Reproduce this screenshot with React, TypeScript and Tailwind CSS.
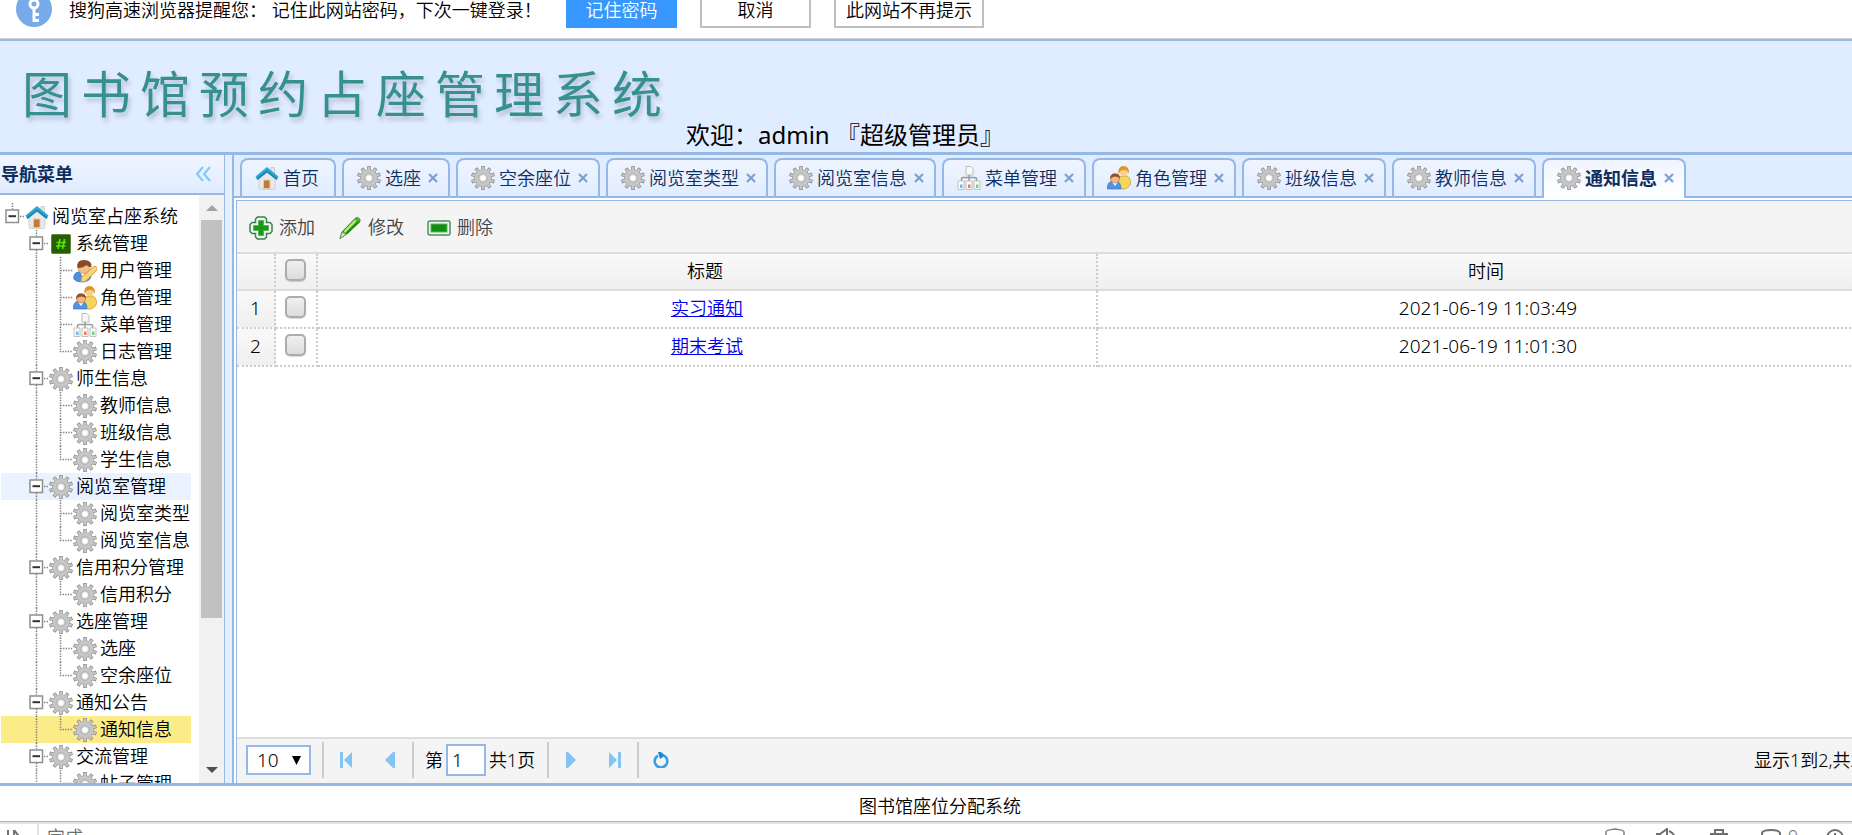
import { useState } from "react";
import type { ReactNode } from "react";

type IconName = "home" | "gear" | "hash" | "user" | "role" | "menu";

type TreeRow = {
  label: string;
  icon: IconName;
  level: 0 | 1 | 2;
  last?: boolean;
};

const treeRows: TreeRow[] = [
  { label: "阅览室占座系统", icon: "home", level: 0 },
  { label: "系统管理", icon: "hash", level: 1 },
  { label: "用户管理", icon: "user", level: 2 },
  { label: "角色管理", icon: "role", level: 2 },
  { label: "菜单管理", icon: "menu", level: 2 },
  { label: "日志管理", icon: "gear", level: 2, last: true },
  { label: "师生信息", icon: "gear", level: 1 },
  { label: "教师信息", icon: "gear", level: 2 },
  { label: "班级信息", icon: "gear", level: 2 },
  { label: "学生信息", icon: "gear", level: 2, last: true },
  { label: "阅览室管理", icon: "gear", level: 1 },
  { label: "阅览室类型", icon: "gear", level: 2 },
  { label: "阅览室信息", icon: "gear", level: 2, last: true },
  { label: "信用积分管理", icon: "gear", level: 1 },
  { label: "信用积分", icon: "gear", level: 2, last: true },
  { label: "选座管理", icon: "gear", level: 1 },
  { label: "选座", icon: "gear", level: 2 },
  { label: "空余座位", icon: "gear", level: 2, last: true },
  { label: "通知公告", icon: "gear", level: 1 },
  { label: "通知信息", icon: "gear", level: 2, last: true },
  { label: "交流管理", icon: "gear", level: 1 },
  { label: "帖子管理", icon: "gear", level: 2 },
];

const tabs: { label: string; icon: IconName }[] = [
  { label: "首页", icon: "home" },
  { label: "选座", icon: "gear" },
  { label: "空余座位", icon: "gear" },
  { label: "阅览室类型", icon: "gear" },
  { label: "阅览室信息", icon: "gear" },
  { label: "菜单管理", icon: "menu" },
  { label: "角色管理", icon: "role" },
  { label: "班级信息", icon: "gear" },
  { label: "教师信息", icon: "gear" },
  { label: "通知信息", icon: "gear" },
];

const notices = [
  { title: "实习通知", time: "2021-06-19 11:03:49" },
  { title: "期末考试", time: "2021-06-19 11:01:30" },
];

export default function App() {
  const [active, setActive] = useState("通知信息");

  return (
    <div className="flex h-screen flex-col overflow-hidden bg-white font-['Noto_Sans','Noto_Sans_CJK_SC',sans-serif] text-[18px] font-[350] leading-[27px] text-black">
      <PasswordBar />

      {/* Banner */}
      <header className="flex h-[116px] shrink-0 items-end border-t-2 border-b-3 border-[#95b8e7] bg-[#e0ecff]">
        <h1 className="mb-7 ml-[22px] flex w-[640px] shrink-0 justify-between text-[50px] leading-[60px] font-normal text-[#35908f] [text-shadow:2px_4px_4px_rgba(120,130,160,0.4)]">
          {[..."图书馆预约占座管理系统"].map((c) => (
            <span key={c}>{c}</span>
          ))}
        </h1>
        <p className="ml-6 shrink-0 text-2xl leading-[34px] font-normal">欢迎：admin 『超级管理员』</p>
      </header>

      <div className="flex min-h-0 flex-1 border-b-3 border-[#95b8e7]">
        <Sidebar active={active} onSelect={setActive} />
        <div className="w-[7px] shrink-0 bg-[#e6eefa]" />
        <main className="min-w-0 flex-1 border-l-2 border-[#95b8e7]">
          {/* the grid is a little wider than the window and gets cut off on the right */}
          <div className="flex h-full w-[calc(100%+54px)] flex-col">
            <TabBar active={active} onSelect={setActive} />
            <section className="mt-0.5 ml-0.5 flex min-h-0 flex-1 flex-col border-t border-l border-[#95b8e7]">
              <Toolbar />
              <NoticeGrid />
              <Pager />
            </section>
          </div>
        </main>
      </div>

      <footer className="h-9 shrink-0 border-b border-[#95b8e7] pt-[7px] pl-7 text-center">
        图书馆座位分配系统
      </footer>
      <StatusBar />
    </div>
  );
}

function PasswordBar() {
  return (
    <div className="flex h-[39px] shrink-0 border-b border-[#cfcfcf] pl-4">
      <svg className="h-7 w-9 shrink-0" viewBox="0 9 36 28">
        <circle cx="18" cy="18" r="18" fill="#78a9e8" />
        <circle cx="18" cy="13" r="4" fill="none" stroke="#fff" strokeWidth="3" />
        <path d="M18 17v14M18 23.500h5M18 29.500h5" fill="none" stroke="#fff" strokeWidth="3" />
      </svg>
      <p className="ml-[17px] w-[479px] shrink-0 leading-5">
        搜狗高速浏览器提醒您： 记住此网站密码，下次一键登录！
      </p>
      <div className="ml-[18px] flex h-7 shrink-0 leading-5">
        <button className="w-[111px] bg-[#3797ff] pb-2 text-white">记住密码</button>
        <button className="ml-[23px] w-[111px] border-2 border-t-0 border-[#bfbfbf] pb-1.5">取消</button>
        <button className="ml-[23px] w-[150px] border-2 border-t-0 border-[#bfbfbf] pb-1.5">此网站不再提示</button>
      </div>
    </div>
  );
}

function Sidebar({ active, onSelect }: { active: string; onSelect: (label: string) => void }) {
  return (
    <aside className="flex w-[225px] shrink-0 flex-col border-r border-[#95b8e7]">
      <div className="flex h-10 shrink-0 items-center justify-between border-b-2 border-[#95b8e7] bg-linear-to-b from-[#eff5ff] to-[#e0ecff] pr-[13px] pl-px">
        <h2 className="font-bold text-[#0e2d5f]">导航菜单</h2>
        <button aria-label="收起">
          <svg className="h-4 w-4" viewBox="0 0 16 16" fill="none" stroke="#7cc8ff" strokeWidth="2">
            <path d="M8 1 2 8l6 7M15 1 9 8l6 7" />
          </svg>
        </button>
      </div>
      <div className="flex min-h-0 flex-1">
        <ul className="ml-px flex-1 overflow-hidden pt-2 pr-2">
          {treeRows.map((row) => (
            <TreeNode key={row.icon + row.label} row={row} active={active} onSelect={onSelect} />
          ))}
        </ul>
        <div className="flex w-[25px] shrink-0 flex-col items-center bg-[#f1f1f1] pt-2.5 pb-2.5">
          <svg className="h-1.5 w-3" viewBox="0 0 12 6">
            <path d="M0 6 6 0l6 6z" fill="#a3a3a3" />
          </svg>
          <div className="mt-[9px] h-[70%] w-[21px] bg-[#c1c1c1]" />
          <svg className="mt-auto h-1.5 w-3" viewBox="0 0 12 6">
            <path d="M0 0h12L6 6z" fill="#505050" />
          </svg>
        </div>
      </div>
    </aside>
  );
}

function TreeNode({
  row,
  active,
  onSelect,
}: {
  row: TreeRow;
  active: string;
  onSelect: (label: string) => void;
}) {
  const selected = row.level === 2 && row.label === active;
  const hovered = row.label === "阅览室管理";

  return (
    <li className={selected ? "bg-[#fbec88]" : hovered ? "bg-[#eaf2ff]" : ""}>
      <a
        href="#"
        className="flex h-[27px] items-center whitespace-nowrap"
        onClick={(e) => {
          e.preventDefault();
          if (row.level === 2) onSelect(row.label);
        }}
      >
        {row.level > 0 && <span className="w-6 shrink-0" />}
        {row.level === 2 && <TreeCell lines="M11.500 0v27" />}
        {row.level === 2 && <TreeCell lines={row.last ? "M11.500 0v13.500h12" : "M11.500 0v27M11.500 13.500h12"} />}
        {row.level === 1 && <TreeCell lines="M11.500 0v6M11.500 20v7M19 13.500h5" box />}
        {row.level === 0 && <TreeCell lines="M11.500 0v6M19 13.500h5" box />}
        <Icon name={row.icon} />
        <span className="ml-[3px]">{row.label}</span>
      </a>
    </li>
  );
}

function TreeCell({ lines, box }: { lines: string; box?: boolean }) {
  return (
    <svg className="h-[27px] w-6 shrink-0" viewBox="0 0 24 27" fill="none">
      <path d={lines} stroke="#7c7c7c" strokeWidth="1.500" strokeDasharray="1.300 1.300" />
      {box && (
        <>
          <rect x="5" y="7" width="12.500" height="12.500" fill="#fff" stroke="#8e8e8e" strokeWidth="1.500" />
          <path d="M7.500 13.200H15" stroke="#333" strokeWidth="2" />
        </>
      )}
    </svg>
  );
}

function TabBar({ active, onSelect }: { active: string; onSelect: (label: string) => void }) {
  return (
    <div className="flex h-[43px] shrink-0 gap-1.5 border-b-2 border-[#95b8e7] bg-[#e0ecff] pt-[3px] pl-1.5">
      {tabs.map(({ label, icon }) => {
        const on = label === active;
        return (
          <div
            key={label}
            className={
              on
                ? "-mb-0.5 flex shrink-0 items-center rounded-t-lg border-2 border-b-0 border-[#95b8e7] bg-linear-to-b from-[#eff5ff] to-white pb-0.5 pl-[13px] font-bold text-[#0e2d5f]"
                : "flex shrink-0 items-center rounded-t-lg border-2 border-b-0 border-[#95b8e7] bg-linear-to-b from-[#eff5ff] to-[#e0ecff] pl-[13px] text-[#0e2d5f]"
            }
          >
            <button className="flex items-center gap-1" onClick={() => onSelect(label)}>
              <Icon name={icon} />
              {label}
            </button>
            {icon === "home" ? (
              <span className="w-[15px]" />
            ) : (
              <button className="mr-2.5 ml-[7px]" aria-label={"关闭" + label}>
                <svg className="h-2.5 w-2.5" viewBox="0 0 10 10">
                  <path d="m1 1 8 8M9 1 1 9" stroke="#7d9fd3" strokeWidth="2.200" />
                </svg>
              </button>
            )}
          </div>
        );
      })}
    </div>
  );
}

function Toolbar() {
  return (
    <div className="flex h-[53px] shrink-0 items-center gap-[23px] border-b-2 border-[#ddd] bg-[#f4f4f4] pt-0.5 pl-3 text-[#444]">
      <button className="flex items-center gap-1.5">
        <svg className="h-6 w-6" viewBox="0 0 24 24">
          <path
            d="M8.500 1h7l2 2v3.500H21l2 2v7l-2 2h-3.500V21l-2 2h-7l-2-2v-3.500H3l-2-2v-7l2-2h3.500V3z"
            fill="#eef8ee"
            stroke="#3d7f4f"
            strokeWidth="1.500"
          />
          <path d="M9.500 4.500h5v5h5v5h-5v5h-5v-5h-5v-5h5z" fill="#149a14" stroke="#5fae63" />
        </svg>
        添加
      </button>
      <button className="flex items-center gap-1.5">
        <svg className="h-6 w-6" viewBox="0 0 24 24">
          <path d="M17 2.500q1.500-1.500 3.500-.5t1.500 3.500L8 18.500l-6 4L4 16z" fill="#55b82a" stroke="#2f7d32" />
          <path d="M17.500 4.500 6.500 16" stroke="#b8f07a" strokeWidth="2" />
          <path d="m4 16 4 2.500-6 4z" fill="#e3e8cf" stroke="#5d7a50" strokeWidth=".7" />
          <path d="M21 5.500 8.500 17.500" stroke="#1d8a1d" strokeWidth="2" />
        </svg>
        修改
      </button>
      <button className="flex items-center gap-1.5">
        <svg className="h-6 w-6" viewBox="0 0 24 24">
          <rect x="1" y="5" width="22" height="14" rx="2" fill="#eef8ee" stroke="#4a8f5a" strokeWidth="1.500" />
          <rect x="4" y="8" width="16" height="8" fill="#0f8f10" stroke="#5fae63" />
        </svg>
        删除
      </button>
    </div>
  );
}

const dotted = "border-r-2 border-dotted border-[#ccc]";
const checkbox =
  "block h-[22px] w-[21px] appearance-none rounded-[5px] border-2 border-[#acacac] bg-linear-to-b from-[#f0f0f0] to-[#dcdcdc] shadow-[0_1px_1px_rgba(0,0,0,0.15)]";

function NoticeGrid() {
  return (
    <div className="min-h-0 flex-1 overflow-hidden bg-white">
      <table className="w-full table-fixed border-separate border-spacing-0">
        <thead>
          <tr className="h-[37px] bg-linear-to-b from-[#f9f9f9] to-[#efefef]">
            <th className={`w-[39px] border-b-2 border-b-[#ddd] ${dotted} [border-bottom-style:solid]`} />
            <th className={`w-[42px] border-b-2 border-b-[#ddd] ${dotted} pb-1 pl-[9px] [border-bottom-style:solid]`}>
              <input type="checkbox" aria-label="全选" className={checkbox} />
            </th>
            <th className={`w-[780px] border-b-2 border-b-[#ddd] ${dotted} pr-1 font-[350] [border-bottom-style:solid]`}>
              标题
            </th>
            <th className="w-[780px] border-b-2 border-[#ddd] pr-1 font-[350]">时间</th>
            <th className="border-b-2 border-[#ddd]" />
          </tr>
        </thead>
        <tbody>
          {notices.map((n, i) => (
            <tr key={n.title} className="h-[38px]">
              <td className={`border-b-2 ${dotted} bg-linear-to-b from-[#f9f9f9] to-[#efefef] pb-0.5 text-center text-[19px]`}>
                {i + 1}
              </td>
              <td className={`border-b-2 ${dotted} pb-1 pl-[9px]`}>
                <input type="checkbox" aria-label={n.title} className={checkbox} />
              </td>
              <td className={`border-b-2 ${dotted} pb-0.5 text-center`}>
                <a href="#" className="text-[#0000ee] underline">
                  {n.title}
                </a>
              </td>
              <td className="border-b-2 border-dotted border-[#ccc] pb-0.5 text-center text-[19px]">{n.time}</td>
              <td className="border-b-2 border-dotted border-[#ccc]" />
            </tr>
          ))}
        </tbody>
      </table>
    </div>
  );
}

function PagerButton({ label, children }: { label: string; children: ReactNode }) {
  return (
    <button className="flex w-11 justify-center" aria-label={label}>
      <svg className="h-4 w-4" viewBox="0 0 16 16" fill="#84c4f1">
        {children}
      </svg>
    </button>
  );
}

function Divider() {
  return <span className="h-9 w-0.5 shrink-0 bg-[#ccc]" />;
}

function Pager() {
  return (
    <div className="flex h-[46px] shrink-0 items-center border-t-2 border-[#ddd] bg-[#f4f4f4] pb-0.5 pl-[9px]">
      <div className="relative mr-[11px]">
        <select
          aria-label="每页条数"
          className="block h-[30px] w-[65px] appearance-none border-2 border-[#95b8e7] bg-white pl-[9px] text-[19px] leading-6"
        >
          <option>10</option>
          <option>20</option>
          <option>50</option>
        </select>
        <svg className="pointer-events-none absolute top-[11px] right-2.5 h-[9px] w-[9px]" viewBox="0 0 9 9">
          <path d="M0 0h9L4.500 9z" />
        </svg>
      </div>
      <Divider />
      <PagerButton label="第一页">
        <path d="M2 0h3v16H2zM14 0v16L6 8z" />
      </PagerButton>
      <PagerButton label="上一页">
        <path d="M13 0v16h-2L3 8l8-8z" />
      </PagerButton>
      <Divider />
      <label className="flex items-center pl-[11px]">
        第
        <input
          defaultValue="1"
          className="mr-[3px] ml-[3px] h-8 w-10 border-2 border-[#95b8e7] bg-white px-1 text-[19px] outline-none"
        />
        <span className="mr-3">共1页</span>
      </label>
      <Divider />
      <PagerButton label="下一页">
        <path d="M3 0v16h2l8-8-8-8z" />
      </PagerButton>
      <PagerButton label="最后一页">
        <path d="M11 0h3v16h-3zM2 0v16l8-8z" />
      </PagerButton>
      <Divider />
      <PagerButton label="刷新">
        <path d="M11 3.600A6.300 6.300 0 1 1 5 3.600" fill="none" stroke="#3c9fe4" strokeWidth="2.600" />
        <path d="M5 0h3l4 3.500L7 7z" fill="#1c86d8" />
      </PagerButton>
      <p className="ml-auto w-[152px] whitespace-nowrap">显示1到2,共2记录</p>
    </div>
  );
}

function StatusBar() {
  return (
    <div className="flex h-[13px] shrink-0 overflow-hidden border-t-2 border-[#e2e2e2] text-[#707070]">
      <svg className="mt-1.5 ml-1.5 h-5 w-4 shrink-0" viewBox="0 0 16 20" fill="none" stroke="#707070" strokeWidth="2">
        <path d="M2 0v20M8 0v20l8-10z" />
      </svg>
      <span className="ml-[15px] h-full w-0.5 bg-[#e2e2e2]" />
      <span className="ml-2 shrink-0">完成</span>
      <div className="ml-auto flex shrink-0 pt-1 pr-2">
        <svg className="h-5 w-5" viewBox="0 0 20 20" fill="none" stroke="#808080" strokeWidth="1.500">
          <path d="M1 20V4q0-2 9-3 9 1 9 3v16" />
        </svg>
        <svg className="ml-[31px] h-5 w-5" viewBox="0 0 20 20" fill="none" stroke="#707070" strokeWidth="2">
          <path d="M0 6h4l7-5v18M13 3q5 2 6 7" />
        </svg>
        <svg className="ml-[34px] h-5 w-[18px]" viewBox="0 0 18 20" fill="none" stroke="#707070" strokeWidth="2">
          <path d="M5 6V2h8v4M0 6h18" />
        </svg>
        <svg className="ml-[33px] h-5 w-5" viewBox="0 0 20 20" fill="none" stroke="#707070" strokeWidth="2">
          <path d="M1 20V5q1-3 9-3t9 3v15" />
        </svg>
        <span className="-mt-1 ml-[7px] leading-6">0</span>
        <svg className="ml-7 h-5 w-[18px]" viewBox="0 0 18 20" fill="none" stroke="#707070" strokeWidth="2">
          <circle cx="9" cy="10" r="8" />
          <path d="M9 5v6" />
        </svg>
      </div>
    </div>
  );
}

const gearSpokes = [0, 36, 72, 108, 144];

function Icon({ name }: { name: IconName }) {
  return (
    <svg className="h-6 w-6 shrink-0" viewBox="0 0 24 24">
      {name === "home" && (
        <>
          <path d="M16 1.500h3.500V8H16z" fill="#e9e9e9" stroke="#bdbdbd" strokeWidth=".7" />
          <path d="M4 11 12 4l8 7v11q0 1.500-1.500 1.500h-13Q4 23.500 4 22z" fill="#e9e9e9" stroke="#c6c6c6" strokeWidth=".7" />
          <path d="M8.500 14h6.500v8.500H8.500z" fill="#c27a3c" stroke="#e8c9a8" />
          <path d="M12 1 .5 10.500 2.500 14 12 6.500l9.500 7.500 2-3.500z" fill="#2fa9d3" />
          <path d="M2.500 14 12 6.500l9.500 7.500 1-1.800L12 4.300 1.500 12.200z" fill="#16779f" opacity=".7" />
        </>
      )}
      {name === "gear" && (
        <>
          {gearSpokes.map((a) => (
            <path key={a} d="M12 0v24" stroke="#8e8e8e" strokeWidth="3.600" transform={`rotate(${a} 12 12)`} />
          ))}
          <circle cx="12" cy="12" r="8.800" fill="#979797" />
          {gearSpokes.map((a) => (
            <path key={a} d="M12 .7v22.600" stroke="#c6c6c6" strokeWidth="2.300" transform={`rotate(${a} 12 12)`} />
          ))}
          <circle cx="12" cy="12" r="8.200" fill="#c6c6c6" />
          <circle cx="12" cy="12" r="4.200" fill="#e2e2e2" stroke="#aaa" />
          <circle cx="12" cy="12" r="2.500" fill="#fff" />
        </>
      )}
      {name === "hash" && (
        <>
          <rect x="2.500" y="2.500" width="19" height="19" rx="1" fill="#2b5c05" stroke="#5c8a3a" />
          <path d="M11 7 9 17M15.500 7l-2 10M7.500 10.500H17M7 14h9.500" stroke="#4ee80c" strokeWidth="1.600" />
        </>
      )}
      {name === "user" && (
        <>
          <path d="M.8 20q-.5-6 4.200-7h9q4 2 4 5-2 5-9 5-6 0-8.200-3z" fill="#4f8fe0" stroke="#3a72bd" strokeWidth=".7" />
          <path d="m7 13 3 5 4-5z" fill="#fff" />
          <circle cx="11" cy="8.500" r="6" fill="#f2c08d" stroke="#b9743f" strokeWidth=".6" />
          <path d="M4.500 9Q3 1 11 1t7.500 7q-3 .5-5-2-3 3-9 3z" fill="#8a4b22" />
          <path d="m8 22.500.5-4L19 9q3-3 4.500-1t-.5 4L12 22.500z" fill="#f8d57a" stroke="#d99a3a" />
        </>
      )}
      {name === "role" && (
        <>
          <path d="M12 20q-2-9 3-10h5q4 2 3.500 8-3 6-9 5z" fill="#f4d65c" stroke="#c99425" strokeWidth=".7" />
          <circle cx="16.500" cy="5.500" r="4.500" fill="#f5cf9a" />
          <path d="M11.500 8q-1-8 5-8t5.500 8q-1-4-5-4-4 0-5.500 4z" fill="#dd9a1e" />
          <path d="M.5 23Q0 15.500 5 15.500h5q4 1 4 7.500z" fill="#4f93ea" stroke="#3a72bd" strokeWidth=".7" />
          <path d="m5 16 3 4 3-4z" fill="#fff" />
          <circle cx="8" cy="12.500" r="4.500" fill="#f0b684" stroke="#b06a38" strokeWidth=".6" />
          <path d="M3.200 13Q2.800 7.500 8 7.500t5 5Q11 10.500 8 10.500T3.200 13z" fill="#8f5227" />
        </>
      )}
      {name === "menu" && (
        <>
          <path d="M9 .5h5l2 2V9H9z" fill="#f8f8f8" stroke="#bdbdbd" />
          <path d="M12 9v3M4.500 16v-3q0-1.500 2-1.500h11q2 0 2 1.500v3M12 11.500V16" fill="none" stroke="#9a9a9a" strokeWidth="1.500" />
          <path d="M1 15h6v8.500H1zM9 15h6v8.500H9zM17 15h6v8.500h-6z" fill="#fcfcfc" stroke="#c0c0c0" />
          <path d="M3 18.500h2.500V22H3z" fill="#6fb4ea" />
          <path d="M11 18.500h2.500V22H11z" fill="#ee7d50" />
          <path d="M19 18.500h2.500V22H19z" fill="#6fd37c" />
        </>
      )}
    </svg>
  );
}
